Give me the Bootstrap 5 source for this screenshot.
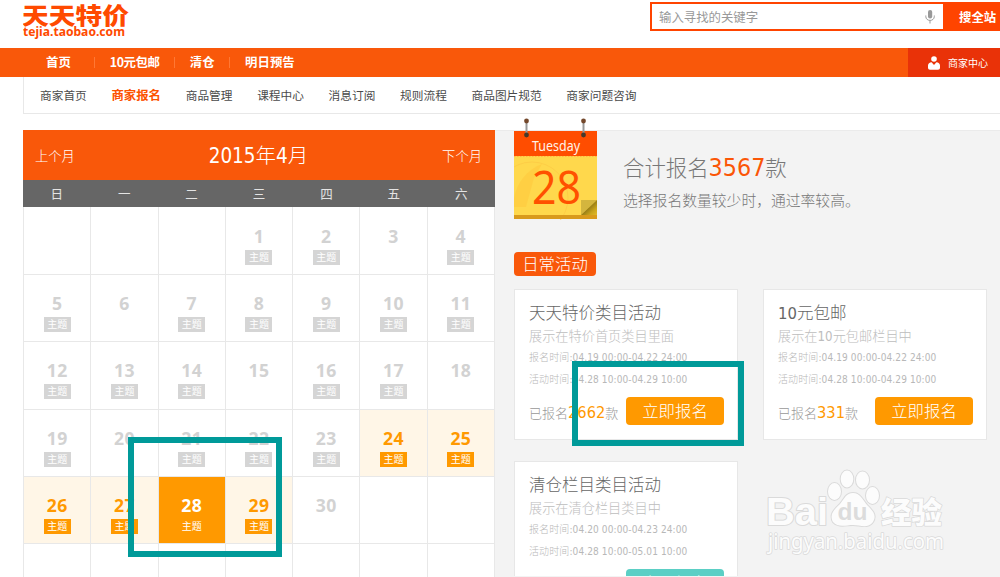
<!DOCTYPE html>
<html lang="zh-CN">
<head>
<meta charset="utf-8">
<meta name="viewport" content="width=device-width, initial-scale=1">
<title>天天特价 - 商家报名</title>
<link href="https://cdn.jsdelivr.net/npm/bootstrap@5.3.0/dist/css/bootstrap.min.css" rel="stylesheet">
<style>
:root{--tj-orange:#f9580a;--tj-red:#ff4400;--tj-amber:#ff9900;--tj-line:#e8e8e8}
body{font-family:"DejaVu Sans Condensed","Noto Sans CJK SC",sans-serif;font-size:12px;line-height:1;color:#555;height:577px;width:1000px;overflow:hidden;background:#fff}
a{color:inherit;text-decoration:none;white-space:nowrap}
.cjk{font-family:"Noto Sans CJK SC",sans-serif}
.thin{font-family:"DejaVu Sans Condensed","Noto Sans CJK SC Light","Noto Sans CJK SC",sans-serif;font-weight:300}
.top-bar{height:48px;padding-left:23px;padding-top:2px}
.brand-logo{width:108px;height:40px}
.search-box{width:350px;height:29px}
.search-field{border:2px solid var(--tj-red);width:295px;padding:1px 8px 0 7px;color:#999;font-size:12.4px}
.search-go{background:var(--tj-red);color:#fff;font-weight:700;font-size:12.4px;padding-left:14px;padding-top:2px;flex:1;white-space:nowrap}
.main-nav{height:29px;background:var(--tj-orange);color:#fff;font-size:12.4px;font-weight:700;padding-left:23px}
.main-nav .entry{border-right:1px solid #ff7834;height:11px;padding:0 14.5px 0 15px}
.main-nav .entry.first{padding:0 23px}
.main-nav .entry.tight{letter-spacing:-.45px}
.main-nav .entry:last-of-type{border:0}
.seller{background:#e93208;width:92px;font-size:10px;font-weight:400;padding-left:21px}
.sub-nav{height:37px;margin-left:23px;padding-left:16px;border-left:1px solid var(--tj-line);border-bottom:1px solid var(--tj-line);gap:24.7px;font-size:11.7px;color:#4a4a4a}
.sub-nav .current{color:#fc5200;font-weight:700;font-size:12.4px}
.main-area{margin:16px 0 0 23px;height:447px;overflow:hidden}
.with-pins{overflow:visible}
.cal{width:472px;flex:none;height:447px;overflow:hidden}
.cal-head{height:50px;background:var(--tj-orange);color:#fff;font-size:13.3px;padding:3px 13px 0 12px}
.cal-title{font-size:20.5px}
.cal-grid{display:grid;grid-template-columns:repeat(7,1fr)}
.week{height:27px;background:#666;color:#e4e4e4;font-size:12.5px;padding-top:1px}
.week span{display:grid;place-items:center}
.days{grid-template-rows:68px;grid-auto-rows:67.25px;border-left:1px solid var(--tj-line)}
.days>div{border-right:1px solid var(--tj-line);border-bottom:1px solid var(--tj-line);text-align:center;padding-top:20px;color:#d2d2d2}
.days>div:nth-child(-n+7){padding-top:21px}
.days b{display:block;font-family:"Noto Sans",sans-serif;font-size:17.6px;letter-spacing:.4px;line-height:17px;margin-bottom:5px}
.days i{display:inline-block;font-style:normal;width:27px;height:15px;line-height:15px;font-size:10px;background:#d5d5d5;color:#fff}
.days .open{background:#fff6e7;color:var(--tj-amber)}
.days .open i{background:var(--tj-amber)}
.days .today{background:var(--tj-amber);color:#fff}
.days .today i{background:none}
.panel{background:#f3f3f3;border-top:1px solid #ebebeb;padding-left:19px;height:447px}
.summary{height:89px;gap:25px}
.date-art{width:84px;height:102px;margin-top:-13px;flex:none}
.sum-total{font-size:21.4px;line-height:28px;margin-top:23px;color:#777;white-space:nowrap}
.sum-total strong{font-size:24.8px;font-weight:400;color:#fb5607}
.sum-note{font-size:14.8px;line-height:20px;margin-top:8px;color:#777}
.tag-title{display:block;width:82px;height:24px;line-height:25px;border-radius:4px;background:var(--tj-orange);color:#fff;font-size:16.4px;text-align:center;margin-top:32px}
.offers{display:grid;grid-template-columns:224px 224px;grid-auto-rows:151px;column-gap:25px;row-gap:21px;margin-top:13px;height:287px;overflow:hidden}
.offer{background:#fff;border:1px solid #e7e7e7;padding:13px 13px 0 14px;white-space:nowrap;color:#b8b8b8}
.offer h3{font-size:16.5px;line-height:22px;margin:0 0 2px;color:#666;font-weight:300}
.offer p{font-size:13.2px;line-height:20px;margin:0;color:#bdbdbd}
.offer small{display:block;font-size:10px;line-height:21.6px;height:21.6px;letter-spacing:.11px}
.offer-foot{margin-top:6.5px;font-size:13px;color:#999}
.offer-foot>span{padding-top:4px}
.offer-foot em{font-style:normal;font-size:16.3px;color:var(--tj-amber)}
.join{width:98px;height:28px;line-height:29px;border-radius:4px;background:var(--tj-amber);color:#fff;font-size:16.4px;text-align:center}
.join.teal{background:#5bcfc5}
.marker{position:absolute;border:6px solid #009a99}
.marker-day{left:128px;top:437px;width:154px;height:120px}
.marker-join{left:572px;top:361px;width:172px;height:85px}
.watermark{position:absolute;left:760px;top:464px}
</style>
</head>
<body class="position-relative">
<header class="top-bar d-flex justify-content-between">
  <svg class="brand-logo" viewBox="0 0 108 40" fill="#ff4a00">
    <text x="-1" y="21.500" font-family="Noto Sans CJK SC" font-weight="900" font-size="22.500" textLength="107" lengthAdjust="spacingAndGlyphs">天天特价</text>
    <text x="0" y="33.500" font-family="Noto Sans" font-weight="700" font-size="12.500" textLength="102" lengthAdjust="spacingAndGlyphs">tejia.taobao.com</text>
  </svg>
  <div class="search-box d-flex cjk">
    <div class="search-field d-flex align-items-center justify-content-between">
      <span>输入寻找的关键字</span>
      <svg width="10" height="14" viewBox="0 0 10 14" fill="none" stroke="#999"><rect x="3" y="0" width="4.200" height="8.500" rx="2.100" fill="#999" stroke="none"/><path d="M.8 5.500v1c0 5.200 8.500 5.200 8.500 0v-1M5 10.500V13.500"/></svg>
    </div>
    <div class="search-go d-flex align-items-center">搜全站</div>
  </div>
</header>
<nav class="main-nav d-flex align-items-center cjk">
  <a class="entry first d-flex align-items-center" href="#">首页</a>
  <a class="entry tight d-flex align-items-center" href="#">10元包邮</a>
  <a class="entry d-flex align-items-center" href="#">清仓</a>
  <a class="entry d-flex align-items-center" href="#">明日预告</a>
  <div class="seller d-flex align-items-center ms-auto h-100">
    <svg class="me-2" style="margin-left:-1px" width="12" height="14" viewBox="0 0 12 14" fill="#fff"><circle cx="6" cy="3" r="2.800"/><path d="M0 12V9.500C0 7.500 1.500 6.600 3.600 6.300L6 9l2.400-2.700C10.500 6.600 12 7.500 12 9.500V12Q12 13.700 10 13.700H2Q0 13.700 0 12Z"/></svg>
    <span>商家中心</span>
  </div>
</nav>
<nav class="sub-nav d-flex align-items-center cjk">
  <a href="#">商家首页</a><a class="current" href="#">商家报名</a><a href="#">商品管理</a><a href="#">课程中心</a><a href="#">消息订阅</a><a href="#">规则流程</a><a href="#">商品图片规范</a><a href="#">商家问题咨询</a>
</nav>
<main class="main-area with-pins d-flex">
  <section class="cal">
    <div class="cal-head d-flex align-items-center justify-content-between thin"><a href="#">上个月</a><span class="cal-title">2015年4月</span><a href="#">下个月</a></div>
    <div class="cal-grid week cjk"><span>日</span><span>一</span><span>二</span><span>三</span><span>四</span><span>五</span><span>六</span></div>
    <div class="cal-grid days">
      <div></div><div></div><div></div><div><b>1</b><i>主题</i></div><div><b>2</b><i>主题</i></div><div><b>3</b></div><div><b>4</b><i>主题</i></div>
      <div><b>5</b><i>主题</i></div><div><b>6</b></div><div><b>7</b><i>主题</i></div><div><b>8</b><i>主题</i></div><div><b>9</b><i>主题</i></div><div><b>10</b><i>主题</i></div><div><b>11</b><i>主题</i></div>
      <div><b>12</b><i>主题</i></div><div><b>13</b><i>主题</i></div><div><b>14</b><i>主题</i></div><div><b>15</b></div><div><b>16</b><i>主题</i></div><div><b>17</b><i>主题</i></div><div><b>18</b></div>
      <div><b>19</b><i>主题</i></div><div><b>20</b></div><div><b>21</b><i>主题</i></div><div><b>22</b><i>主题</i></div><div><b>23</b><i>主题</i></div><div class="open"><b>24</b><i>主题</i></div><div class="open"><b>25</b><i>主题</i></div>
      <div class="open"><b>26</b><i>主题</i></div><div class="open"><b>27</b><i>主题</i></div><div class="today"><b>28</b><i>主题</i></div><div class="open"><b>29</b><i>主题</i></div><div><b>30</b></div><div></div><div></div>
      <div></div><div></div><div></div><div></div><div></div><div></div><div></div>
    </div>
  </section>
  <section class="panel flex-grow-1 thin">
    <div class="summary d-flex">
      <svg class="date-art" viewBox="0 0 84 102">
        <defs>
          <linearGradient id="curl" x1="0" y1="0" x2="1" y2="1"><stop offset=".45" stop-color="#8d7415"/><stop offset=".75" stop-color="#c9a41c"/><stop offset="1" stop-color="#e2b92a"/></linearGradient>
        </defs>
        <rect y="13" width="83" height="25" fill="#ff4d00"/>
        <rect y="38" width="83" height="60" fill="#ffd84c"/>
        <path d="M0 80C3 65 12 52 28 46L20 60L12 89H0Z" fill="#ffcc40" opacity=".7"/>
        <circle cx="18" cy="80" r="36" fill="none" stroke="#fbc743" stroke-width="1" opacity=".6"/>
        <path d="M0 38.500H83" stroke="#ffb347" stroke-dasharray="1.500 1.500"/>
        <rect y="97" width="83" height="4" fill="#d99a1c"/>
        <path d="M67 82H83L67 97Z" fill="#d4b53e"/><path d="M83 82V97H67Z" fill="url(#curl)"/>
        <g stroke="#999" stroke-width="2"><path d="M12.500 4V17M69.500 4V17"/></g>
        <g fill="#74482c"><circle cx="12.500" cy="3" r="2.400"/><circle cx="69.500" cy="3" r="2.400"/></g>
        <g fill="#463a2c"><circle cx="12.500" cy="17" r="2.400"/><circle cx="69.500" cy="17" r="2.400"/></g>
        <text x="18" y="32.500" font-family="Noto Sans" font-weight="400" font-size="13.500" fill="#fff3e8" textLength="48" lengthAdjust="spacingAndGlyphs">Tuesday</text>
        <text x="18" y="86" font-family="Noto Sans" font-weight="400" font-size="46" fill="#ff5100" textLength="49" lengthAdjust="spacingAndGlyphs">28</text>
      </svg>
      <div>
        <div class="sum-total">合计报名<strong>3567</strong>款</div>
        <div class="sum-note">选择报名数量较少时，通过率较高。</div>
      </div>
    </div>
    <span class="tag-title">日常活动</span>
    <div class="offers">
      <article class="offer"><h3>天天特价类目活动</h3><p>展示在特价首页类目里面</p><small>报名时间:04.19 00:00-04.22 24:00</small><small>活动时间:04.28 10:00-04.29 10:00</small>
        <div class="offer-foot d-flex justify-content-between align-items-center"><span>已报名<em>2662</em>款</span><a class="join" href="#">立即报名</a></div></article>
      <article class="offer"><h3>10元包邮</h3><p>展示在10元包邮栏目中</p><small>报名时间:04.19 00:00-04.22 24:00</small><small>活动时间:04.28 10:00-04.29 10:00</small>
        <div class="offer-foot d-flex justify-content-between align-items-center"><span>已报名<em>331</em>款</span><a class="join" href="#">立即报名</a></div></article>
      <article class="offer"><h3>清仓栏目类目活动</h3><p>展示在清仓栏目类目中</p><small>报名时间:04.20 00:00-04.23 24:00</small><small>活动时间:04.28 10:00-05.01 10:00</small>
        <div class="offer-foot d-flex justify-content-end align-items-center"><a class="join teal" href="#">立即报名</a></div></article>
    </div>
  </section>
</main>
<div class="marker marker-day"></div>
<div class="marker marker-join"></div>
<svg class="watermark" width="195" height="100" viewBox="760 464 195 100" fill="#fcfcfc" stroke="#dadada" stroke-width="2" paint-order="stroke" stroke-linejoin="round">
  <text x="766" y="524.500" font-family="Liberation Sans" font-weight="700" font-size="38" textLength="62" lengthAdjust="spacingAndGlyphs">Bai</text>
  <g><ellipse cx="834.500" cy="491.500" rx="6.500" ry="8.500"/><ellipse cx="847" cy="479" rx="6.300" ry="8.500"/><ellipse cx="862.500" cy="480" rx="6.500" ry="8.500"/><ellipse cx="872.500" cy="495.500" rx="6.500" ry="8.500"/>
  <path d="M853 493C860 493 862 499 867 505C873 511 877 515 873 522C868 529 860 525 853 525C846 525 838 528 833 522C829 514 834 510 840 504C845 498 846 493 853 493Z"/></g>
  <text x="837.500" y="520" font-family="Liberation Sans" font-weight="700" font-size="24" fill="#dcdcdc" stroke="none" textLength="30" lengthAdjust="spacingAndGlyphs">du</text>
  <text x="881" y="522.500" font-family="Noto Sans CJK SC" font-weight="900" font-size="30" stroke-width="1.500" textLength="61" lengthAdjust="spacingAndGlyphs">经验</text>
  <text x="768" y="549" font-family="Noto Sans" font-size="21" stroke-width="1.600" textLength="176" lengthAdjust="spacingAndGlyphs">jingyan.baidu.com</text>
</svg>
<script src="https://cdn.jsdelivr.net/npm/bootstrap@5.3.0/dist/js/bootstrap.bundle.min.js"></script>
</body>
</html>
